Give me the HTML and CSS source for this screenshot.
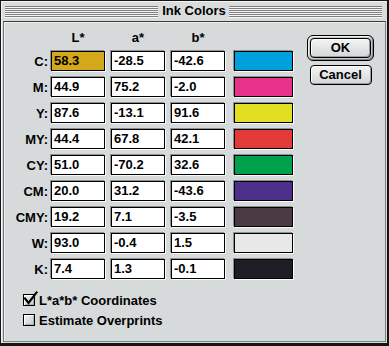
FILE: index.html
```html
<!DOCTYPE html>
<html>
<head>
<meta charset="utf-8">
<link rel="stylesheet" href="styles.css">
</head>
<body>
<div class="window">
  <div class="titlebar">
    <div class="stripes"></div>
    <div class="title">Ink Colors</div>
    <div class="stripes"></div>
  </div>
  <div class="content">
    <div class="left">
      <div class="table">
        <div class="row head">
          <div class="lbl"></div>
          <div class="hcell">L*</div>
          <div class="hcell">a*</div>
          <div class="hcell">b*</div>
        </div>
        <div class="row"><div class="lbl">C:</div><div class="field sel">58.3</div><div class="field">-28.5</div><div class="field">-42.6</div><div class="swatch sw-c"></div></div>
        <div class="row"><div class="lbl">M:</div><div class="field">44.9</div><div class="field">75.2</div><div class="field">-2.0</div><div class="swatch sw-m"></div></div>
        <div class="row"><div class="lbl">Y:</div><div class="field">87.6</div><div class="field">-13.1</div><div class="field">91.6</div><div class="swatch sw-y"></div></div>
        <div class="row"><div class="lbl">MY:</div><div class="field">44.4</div><div class="field">67.8</div><div class="field">42.1</div><div class="swatch sw-my"></div></div>
        <div class="row"><div class="lbl">CY:</div><div class="field">51.0</div><div class="field">-70.2</div><div class="field">32.6</div><div class="swatch sw-cy"></div></div>
        <div class="row"><div class="lbl">CM:</div><div class="field">20.0</div><div class="field">31.2</div><div class="field">-43.6</div><div class="swatch sw-cm"></div></div>
        <div class="row"><div class="lbl">CMY:</div><div class="field">19.2</div><div class="field">7.1</div><div class="field">-3.5</div><div class="swatch sw-cmy"></div></div>
        <div class="row"><div class="lbl">W:</div><div class="field">93.0</div><div class="field">-0.4</div><div class="field">1.5</div><div class="swatch sw-w"></div></div>
        <div class="row"><div class="lbl">K:</div><div class="field">7.4</div><div class="field">1.3</div><div class="field">-0.1</div><div class="swatch sw-k"></div></div>
      </div>
      <div class="checks">
        <div class="check">
          <span class="box"><svg class="mark" width="16" height="16" viewBox="0 0 16 16"><path d="M3 7.5 L6.5 12 L14.5 1.5" fill="none" stroke="#000" stroke-width="2.2" stroke-linecap="square"/></svg></span>
          <span class="ctext">L*a*b* Coordinates</span>
        </div>
        <div class="check">
          <span class="box"></span>
          <span class="ctext">Estimate Overprints</span>
        </div>
      </div>
    </div>
    <div class="buttons">
      <div class="ring"><div class="btn ok">OK</div></div>
      <div class="btn cancel">Cancel</div>
    </div>
  </div>
</div>
</body>
</html>
```
FILE: styles.css
```css
html, body {
  margin: 0;
  padding: 0;
  background: #000;
}
body {
  font-family: "Liberation Sans", Arial, sans-serif;
  font-weight: bold;
  font-size: 13px;
  color: #000;
}
.window {
  width: 389px;
  height: 346px;
  box-sizing: border-box;
  border: 1px solid #151515;
  border-right-width: 2px;
  border-bottom-width: 3px;
  background: #dadcdc;
  padding: 0 1px 1px 2px;
  display: flex;
  flex-direction: column;
  box-shadow: inset 1px 1px 0 #f4f4f4;
}
.titlebar {
  height: 20px;
  display: flex;
  align-items: center;
  padding: 0 4px 0 2px;
}
.stripes {
  flex: 1;
  height: 12px;
  margin-top: 1px;
  background: repeating-linear-gradient(to bottom, #7d7f80 0 1px, #f6f6f6 1px 2px);
}
.title {
  padding: 0 3px 0 4px;
  font-size: 13px;
  line-height: 14px;
}
.content {
  flex: 1;
  display: flex;
  background: #d6dadb;
  border: 1px solid #7d8283;
  border-top-color: #3a3c3d;
  border-left-color: #6d7273;
  box-shadow: inset 1px 1px 0 #eef0f0;
}
.left {
  display: flex;
  flex-direction: column;
}
.table {
  display: flex;
  flex-direction: column;
  gap: 6px;
  padding-top: 9px;
}
.row {
  display: flex;
  align-items: center;
  height: 20px;
}
.row.head {
  height: 14px;
  line-height: 14px;
}
.lbl {
  width: 44px;
  margin-right: 3px;
  text-align: right;
}
.hcell {
  width: 54px;
  text-align: center;
}
.hcell + .hcell {
  margin-left: 6px;
}
.field {
  width: 54px;
  height: 20px;
  box-sizing: border-box;
  border: 1px solid #000;
  background: #fff;
  padding-left: 2px;
  line-height: 18px;
  box-shadow: 1px 1px 0 #fbfbfb, -1px -1px 0 #8c9091;
}
.field + .field {
  margin-left: 6px;
}
.field.sel {
  background: #d3a81b;
}
.swatch {
  width: 59px;
  height: 20px;
  box-sizing: border-box;
  border: 1px solid #000;
  margin-left: 9px;
  box-shadow: 1px 1px 0 #fbfbfb, -1px -1px 0 #8c9091;
}
.sw-c { background: #00a0dc; }
.sw-m { background: #e8318b; }
.sw-y { background: #e2de22; }
.sw-my { background: #e23a37; }
.sw-cy { background: #00a14d; }
.sw-cm { background: #4b2f8a; }
.sw-cmy { background: #4b3a41; }
.sw-w { background: #e8e9e6; }
.sw-k { background: #1e1c25; }

.checks {
  display: flex;
  flex-direction: column;
  margin-top: 11px;
  padding-left: 19px;
}
.check {
  display: flex;
  align-items: center;
  height: 20px;
  gap: 4px;
}
.box {
  position: relative;
  width: 12px;
  height: 12px;
  box-sizing: border-box;
  border: 1px solid #000;
  background: linear-gradient(135deg, #f2f2f2, #c9cbcc);
  box-shadow: inset 1px 1px 0 #fff, inset -1px -1px 0 #a8abac;
}
.mark {
  position: absolute;
  left: -2px;
  top: -4px;
  overflow: visible;
}
.buttons {
  margin-left: auto;
  margin-right: 11px;
  padding-top: 13px;
  display: flex;
  flex-direction: column;
  align-items: center;
  gap: 4px;
}
.ring {
  border: 1px solid #000;
  border-radius: 6px;
  padding: 2px;
  background: #c3c6c7;
  box-shadow: inset 1px 1px 0 #f2f2f2, inset -1px -1px 0 #8a8d8e;
}
.btn {
  width: 62px;
  height: 20px;
  box-sizing: border-box;
  border: 1px solid #000;
  border-radius: 4px;
  background: linear-gradient(#f4f4f4, #d4d6d7);
  box-shadow: inset 1px 1px 0 #fff, inset -1px -1px 0 #9a9d9e;
  text-align: center;
  line-height: 18px;
}
.btn.ok {
  width: 61px;
}
```
